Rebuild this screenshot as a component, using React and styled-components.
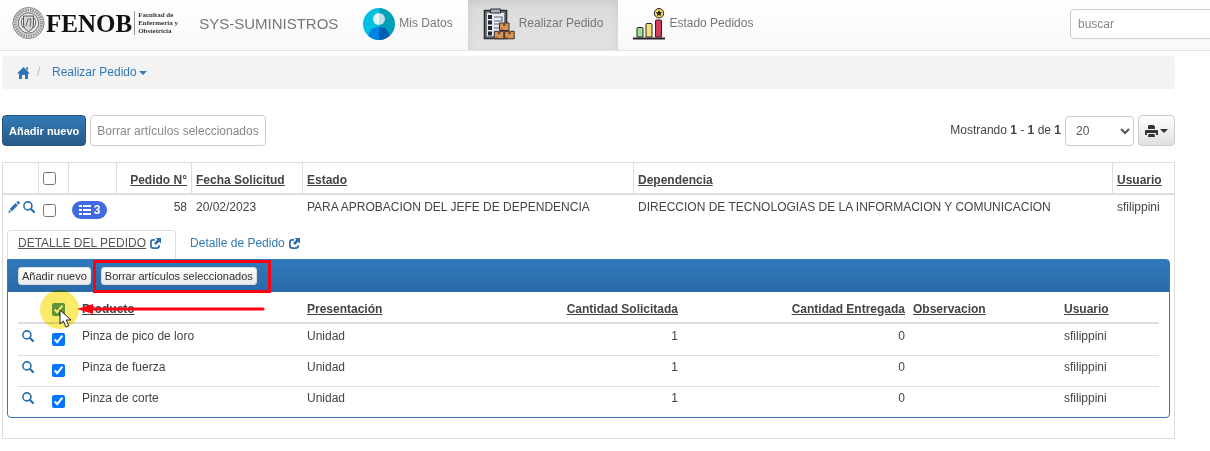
import { useState } from 'react';
import styled, { createGlobalStyle, css } from 'styled-components';

const GlobalStyle = createGlobalStyle`
  * {
    box-sizing: border-box;
  }
  body {
    margin: 0;
    background: #fff;
    color: #444;
    font-family: "Liberation Sans", Arial, sans-serif;
    font-size: 12px;
    line-height: 17px;
    overflow-x: hidden;
  }
  a {
    color: #337ab7;
    text-decoration: none;
  }
  button, input, select {
    font-family: inherit;
    font-size: 12px;
  }
  svg {
    display: block;
    flex: none;
  }
`;

/* Navbar */

const Navbar = styled.nav`
  display: flex;
  height: 51px;
  padding-left: 12px;
  overflow: hidden;
  background: linear-gradient(#fff, #f8f8f8);
  border-bottom: 1px solid #e4e4e4;
`;

const Brand = styled.a`
  display: flex;
  align-items: center;
  height: 46px;
  margin-right: 10px;
  color: #777;
  font-size: 15px;
`;

const LogoName = styled.span`
  margin-left: 1px;
  padding-right: 2px;
  color: #111;
  font-family: "Liberation Serif", serif;
  font-size: 25px;
  font-weight: bold;
`;

const LogoCaption = styled.span`
  width: 65px;
  padding-left: 3px;
  border-left: 1px solid #999;
  color: #333;
  font-family: "Liberation Serif", serif;
  font-size: 7px;
  font-weight: bold;
  line-height: 8px;
  white-space: pre-line;
`;

const NavItem = styled.a`
  display: flex;
  align-items: center;
  gap: 4px;
  height: 50px;
  padding: 0 15px 3px;
  color: #777;
  white-space: nowrap;
  ${({ $active }) =>
    $active &&
    css`
      background: linear-gradient(#dbdbdb, #e2e2e2);
      box-shadow: inset 0 3px 9px rgba(0, 0, 0, 0.08);
    `}
`;

const SearchForm = styled.form`
  flex: none;
  width: 160px;
  margin: 9px -20px 0 auto;
`;

const SearchInput = styled.input`
  width: 100%;
  height: 30px;
  padding: 0 7px;
  border: 1px solid #ccc;
  border-radius: 4px;
  background: #fff;
  &::placeholder {
    color: #888;
  }
`;

/* Page */

const Page = styled.main`
  padding: 5px 35px 12px 2px;
`;

const Breadcrumb = styled.ol`
  display: flex;
  align-items: center;
  height: 33px;
  margin: 0 0 26px;
  padding: 0 15px;
  list-style: none;
  background: #f3f3f3;
  border-radius: 4px;
`;

const Crumb = styled.li`
  display: flex;
  align-items: center;
  & + &::before {
    content: "/";
    width: 15px;
    margin-left: 7px;
    color: #bbb;
  }
  a {
    display: flex;
    align-items: center;
    gap: 2px;
  }
`;

const Toolbar = styled.div`
  display: flex;
  align-items: center;
  gap: 4px;
  margin-bottom: 16px;
`;

const Spacer = styled.div`
  flex: 1;
`;

const Button = styled.button`
  display: flex;
  align-items: center;
  gap: 2px;
  height: 31px;
  padding: 0 6px;
  border: 1px solid #ccc;
  border-radius: 4px;
  background: linear-gradient(#fff, #e0e0e0);
  color: #333;
  white-space: nowrap;
`;

const PrimaryButton = styled(Button)`
  border-color: #245580;
  background: linear-gradient(#337ab7, #265a88);
  color: #fff;
  font-size: 11px;
  font-weight: bold;
`;

const PlainButton = styled(Button)`
  background: #fff;
  color: #888;
`;

const SmallButton = styled(Button)`
  height: 18px;
  padding: 0 3px;
  border-color: #ddd;
  border-radius: 3px;
  background: linear-gradient(#fff, #ebebeb);
  font-size: 11px;
`;

const PageSize = styled.select`
  width: 69px;
  height: 30px;
  padding: 0 0 0 6px;
  border: 1px solid #ccc;
  border-radius: 4px;
  background: #fff;
  color: #555;
`;

/* Tables */

const Table = styled.table`
  width: 100%;
  table-layout: fixed;
  border-collapse: separate;
  border-spacing: 0;
  th,
  td {
    padding: 0 4px;
    text-align: left;
    white-space: nowrap;
  }
  th a {
    color: #444;
    text-decoration: underline;
  }
`;

const OrdersTable = styled(Table)`
  border: 1px solid #ddd;
  > thead > tr > th {
    height: 32px;
    padding: 9px 4px 4px;
    border-bottom: 2px solid #ddd;
    vertical-align: top;
  }
  > thead > tr > th + th {
    border-left: 1px solid #ddd;
  }
  > tbody > tr > td {
    padding: 4px 4px 0 5px;
    vertical-align: top;
  }
`;

const ItemsTable = styled(Table)`
  > thead > tr > th {
    height: 32px;
    padding-top: 4px;
    border-bottom: 2px solid #ddd;
  }
  > tbody > tr > td {
    height: 31px;
    padding: 4px 4px 0;
    vertical-align: top;
  }
  > tbody > tr + tr > td {
    padding-top: 3px;
    border-top: 1px solid #ddd;
  }
`;

const HeadCell = styled.th`
  &&&&& {
    text-align: ${({ $right }) => ($right ? 'right' : 'left')};
  }
`;

const Cell = styled.td`
  &&&&& {
    text-align: ${({ $right }) => ($right ? 'right' : 'left')};
  }
`;

const Actions = styled.div`
  display: flex;
  gap: 3px;
  padding-top: 2px;
`;

const Checkbox = styled.input`
  display: block;
  width: 13px;
  height: 13px;
  margin: ${({ $top = 0 }) => $top}px 0 0;
  accent-color: ${({ $accent = '#0075ff' }) => $accent};
`;

const Badge = styled.a`
  display: flex;
  align-items: center;
  justify-content: center;
  gap: 3px;
  width: 35px;
  height: 18px;
  margin: 2px 0 0 -1px;
  border-radius: 9px;
  background: #4169e1;
  color: #fff;
  font-weight: bold;
`;

/* Detail */

const DetailCell = styled.td`
  &&&&& {
    padding: 11px 4px 20px;
  }
`;

const Tabs = styled.div`
  display: flex;
`;

const Tab = styled.a`
  display: flex;
  align-items: center;
  gap: 4px;
  height: 29px;
  padding: 0 14px 4px 13px;
  border: 1px solid transparent;
  border-bottom: 0;
  ${({ $active }) =>
    $active &&
    css`
      padding-left: 10px;
      border-color: #ddd;
      border-radius: 4px 4px 0 0;
      span {
        color: #555;
        text-decoration: underline;
      }
    `}
`;

const Panel = styled.section`
  position: relative;
  border: 1px solid #337ab7;
  border-radius: 0 4px 4px 4px;
`;

const PanelHead = styled.div`
  display: flex;
  align-items: center;
  gap: 10px;
  height: 32px;
  padding: 0 10px;
  background: linear-gradient(#2f7abb, #2a69a6);
`;

const PanelBody = styled.div`
  padding: 0 10px;
`;

/* Annotations drawn over the panel */

const Frame = styled.div`
  position: absolute;
  top: 0;
  left: 85px;
  width: 178px;
  height: 33px;
  border: 3px solid #fe0010;
  pointer-events: none;
`;

const Spot = styled.div`
  position: absolute;
  top: 30px;
  left: 32px;
  width: 39px;
  height: 39px;
  border-radius: 50%;
  background: #faea68;
  mix-blend-mode: multiply;
  pointer-events: none;
`;

const Arrow = styled.svg`
  position: absolute;
  top: 43px;
  left: 69px;
  pointer-events: none;
`;

const Pointer = styled.svg`
  position: absolute;
  top: 49px;
  left: 51px;
  pointer-events: none;
`;

/* Icons */

const Seal = () => (
  <svg width="33" height="34" viewBox="0 0 33 34" fill="none">
    <circle cx="16.5" cy="17" r="15.6" fill="#e2e2e2" stroke="#888" />
    <circle cx="16.5" cy="17" r="13" stroke="#909090" strokeWidth="3.2" strokeDasharray="1.4 1" />
    <circle cx="16.5" cy="17" r="10.2" fill="#ececec" stroke="#666" />
    <path d="M11.500 10h10v8q0 5-5 7.500-5-2.500-5-7.500z" fill="#d6d6d6" stroke="#555" />
    <path d="m14 20 2-7h3l-1 8M10.500 12q-3 5 1 10M22.500 12q3 5-1 10" stroke="#666" />
  </svg>
);

const UserIcon = () => (
  <svg width="32" height="32" viewBox="0 0 32 32">
    <clipPath id="user-circle">
      <circle cx="16" cy="16" r="16" />
    </clipPath>
    <g clipPath="url(#user-circle)">
      <path fill="#00c2e0" d="M0 0h16v32H0z" />
      <path fill="#009fb8" d="M16 0h16v32H16z" />
      <path fill="#0082e6" d="M5 32q0-13 11-13v13z" />
      <path fill="#005fb0" d="M16 19q11 0 11 13H16z" />
      <path fill="#e5f7fa" d="M16 5a6 6 0 0 0 0 12z" />
      <path fill="#bde2e8" d="M16 5a6 6 0 0 1 0 12z" />
    </g>
  </svg>
);

const Box = ({ x, y }) => (
  <g transform={`translate(${x} ${y})`}>
    <path d="M.5.500h9.500v7.500H.5z" fill="#d79555" stroke="#3b3030" />
    <path d="M4 .5h2.500v3H4z" fill="#7b4b2c" />
    <path d="M2 6.500h2" stroke="#7b4b2c" />
  </g>
);

const OrderIcon = () => (
  <svg width="32" height="32" viewBox="0 0 32 32">
    <path d="M1.500 2.500h22v28h-22z" fill="#747b88" stroke="#292b31" strokeWidth="1.6" />
    <path d="M4 5h17v23H4z" fill="#e5ebf2" />
    <path d="M7.500 1h10v4h-10z" fill="#a8aeb8" stroke="#292b31" />
    <path d="M5 7h4v4H5zm0 5.500h4v4H5zM5 18h4v4H5zm0 5.500h4v4H5z" fill="#24262c" />
    <path d="M11 9h8v4h-8m0 3h7m-7 4h5m-5 5h3" fill="none" stroke="#5a6270" strokeWidth="1.2" />
    <Box x="16" y="14.500" />
    <Box x="10.800" y="22.800" />
    <Box x="21.200" y="22.800" />
  </svg>
);

const StatusIcon = () => (
  <svg width="32" height="32" viewBox="0 0 32 32" stroke="#2b2427">
    <path d="M4 29V20.500q0-1 1-1h4q1 0 1 1V29z" fill="#a5dc9b" />
    <path d="M13 29V16.500q0-1 1-1h4q1 0 1 1V29z" fill="#f6e078" />
    <path d="M22.500 29V13q0-1 1-1h4q1 0 1 1v16z" fill="#cf3d58" />
    <path d="M0 29.500h32v2H0z" fill="#2b2427" stroke="none" />
    <circle cx="26" cy="5.200" r="4.700" fill="#f3d85d" />
    <path d="m26 2 1 2 2.200.3-1.600 1.500.4 2.200-2-1-2 1 .4-2.200-1.600-1.500L25 4z" fill="#2b2427" stroke="none" />
  </svg>
);

const HomeIcon = () => (
  <svg width="13" height="12" viewBox="0 0 13 12" fill="#2b74b4">
    <path d="M6.500 0 13 6.500h-2V12H8V8H5v4H2V6.500H0zM9 .500h2v3L9 1.500z" />
  </svg>
);

const Caret = ({ color = '#337ab7' }) => (
  <svg width="8" height="4" viewBox="0 0 8 4">
    <path d="M0 0h8L4 4z" fill={color} />
  </svg>
);

const PrintIcon = () => (
  <svg width="13" height="12" viewBox="0 0 13 12" fill="#333">
    <path d="M4 0h4.500L10 1.500V4H3V1zM1 5h11q1 0 1 1v4h-2V8H2v2H0V6q0-1 1-1zM3.500 9h6l.5 3H3z" />
  </svg>
);

const PencilIcon = () => (
  <svg width="12" height="12" viewBox="0 0 12 12" fill="#2b6fad">
    <path d="M9.600.300q.6-.5 1.200.1l.9.900q.5.600 0 1.200L10.600 3.600 8.400 1.400zM7.700 2.100l2.200 2.200-6 6-2.200-2.200zM1.200 8.900l2 2L.2 11.800z" />
  </svg>
);

const SearchIcon = () => (
  <svg width="12" height="12" viewBox="0 0 12 12" fill="none" stroke="#2b6fad">
    <circle cx="4.900" cy="4.900" r="4" strokeWidth="1.600" />
    <path d="m7.800 7.800 3.200 3.200" strokeWidth="2.200" strokeLinecap="round" />
  </svg>
);

const ListIcon = () => (
  <svg width="12" height="10" viewBox="0 0 12 10" fill="#fff">
    <path d="M0 0h3v2H0zm4 0h8v2H4zM0 4h3v2H0zm4 0h8v2H4zM0 8h3v2H0zm4 0h8v2H4z" />
  </svg>
);

const OpenIcon = () => (
  <svg width="11" height="11" viewBox="0 0 12 12">
    <path d="M5.500 2H3.500Q1 2 1 4.500v4Q1 11 3.500 11h4Q10 11 10 8.500V8" fill="none" stroke="#2b6fad" strokeWidth="1.900" />
    <path d="M6 0h6v6l-2-2-3.500 3.500-2-2L8 2z" fill="#2b6fad" />
  </svg>
);

const navItems = [
  { label: 'Mis Datos', icon: <UserIcon /> },
  { label: 'Realizar Pedido', icon: <OrderIcon />, active: true },
  { label: 'Estado Pedidos', icon: <StatusIcon /> },
];

const orderColumns = [
  { label: 'Pedido N°', right: true },
  { label: 'Fecha Solicitud' },
  { label: 'Estado' },
  { label: 'Dependencia' },
  { label: 'Usuario' },
];

const itemColumns = [
  { label: 'Producto' },
  { label: 'Presentación' },
  { label: 'Cantidad Solicitada', right: true },
  { label: 'Cantidad Entregada', right: true },
  { label: 'Observacion' },
  { label: 'Usuario' },
];

const items = [
  ['Pinza de pico de loro', 'Unidad', '1', '0', '', 'sfilippini'],
  ['Pinza de fuerza', 'Unidad', '1', '0', '', 'sfilippini'],
  ['Pinza de corte', 'Unidad', '1', '0', '', 'sfilippini'],
];

const Columns = ({ widths }) => (
  <colgroup>
    {widths.map((width, index) => (
      <col key={index} width={width} />
    ))}
  </colgroup>
);

const HeadCells = ({ columns }) =>
  columns.map(({ label, right }) => (
    <HeadCell key={label} $right={right}>
      <a href="#">{label}</a>
    </HeadCell>
  ));

function Items() {
  const [selected, setSelected] = useState(items.map(() => true));

  const toggle = (index) =>
    setSelected(selected.map((value, i) => (i === index ? !value : value)));

  return (
    <Panel>
      <PanelHead>
        <SmallButton type="button">Añadir nuevo</SmallButton>
        <SmallButton type="button">Borrar artículos seleccionados</SmallButton>
      </PanelHead>
      <PanelBody>
        <ItemsTable>
          <Columns widths={[30, 30, 225, 239, 140, 227, 151, 99]} />
          <thead>
            <tr>
              <th />
              <th>
                <Checkbox
                  type="checkbox"
                  aria-label="Seleccionar todos los productos"
                  $accent="#5fa088"
                  checked={selected.every(Boolean)}
                  onChange={(e) =>
                    setSelected(items.map(() => e.target.checked))
                  }
                />
              </th>
              <HeadCells columns={itemColumns} />
            </tr>
          </thead>
          <tbody>
            {items.map((item, index) => (
              <tr key={item[0]}>
                <td>
                  <Actions>
                    <a href="#" aria-label={`Ver ${item[0]}`}>
                      <SearchIcon />
                    </a>
                  </Actions>
                </td>
                <td>
                  <Checkbox
                    type="checkbox"
                    aria-label={item[0]}
                    $top={5}
                    checked={selected[index]}
                    onChange={() => toggle(index)}
                  />
                </td>
                {item.map((value, i) => (
                  <Cell key={i} $right={itemColumns[i].right}>
                    {value}
                  </Cell>
                ))}
              </tr>
            ))}
          </tbody>
        </ItemsTable>
      </PanelBody>
      <Frame />
      <Spot />
      <Arrow width="189" height="12" viewBox="0 0 189 12">
        <path d="M14 6h172" stroke="#fe0010" strokeWidth="3" strokeLinecap="round" />
        <path d="M0 6 16 1v10z" fill="#fe0010" />
      </Arrow>
      <Pointer width="13" height="19" viewBox="0 0 13 19">
        <path d="M1 1v14l3.300-3 2.700 6 2.800-1.200L7.200 11H12z" fill="#fff" stroke="#222" />
      </Pointer>
    </Panel>
  );
}

export default function App() {
  return (
    <>
      <GlobalStyle />
      <Navbar>
        <Brand href="#">
          <Seal />
          <LogoName>FENOB</LogoName>
          <LogoCaption>{'Facultad de\nEnfermería y\nObstetricia'}</LogoCaption>
          SYS-SUMINISTROS
        </Brand>
        {navItems.map(({ label, icon, active }) => (
          <NavItem key={label} href="#" $active={active}>
            {icon}
            {label}
          </NavItem>
        ))}
        <SearchForm>
          <SearchInput type="text" placeholder="buscar" aria-label="buscar" />
        </SearchForm>
      </Navbar>
      <Page>
        <Breadcrumb>
          <Crumb>
            <a href="#" aria-label="Inicio">
              <HomeIcon />
            </a>
          </Crumb>
          <Crumb>
            <a href="#">
              Realizar Pedido
              <Caret />
            </a>
          </Crumb>
        </Breadcrumb>
        <Toolbar>
          <PrimaryButton type="button">Añadir nuevo</PrimaryButton>
          <PlainButton type="button">Borrar artículos seleccionados</PlainButton>
          <Spacer />
          <span>
            Mostrando <b>1</b> - <b>1</b> de <b>1</b>
          </span>
          <PageSize aria-label="Registros por página" defaultValue="20">
            <option>10</option>
            <option>20</option>
            <option>50</option>
          </PageSize>
          <Button type="button" aria-label="Imprimir">
            <PrintIcon />
            <Caret color="#333" />
          </Button>
        </Toolbar>
        <OrdersTable>
          <Columns widths={[35, 30, 48, 75, 111, 331, 479, 62]} />
          <thead>
            <tr>
              <th />
              <th>
                <Checkbox
                  type="checkbox"
                  aria-label="Seleccionar todos los pedidos"
                />
              </th>
              <th />
              <HeadCells columns={orderColumns} />
            </tr>
          </thead>
          <tbody>
            <tr>
              <td>
                <Actions>
                  <a href="#" aria-label="Editar pedido">
                    <PencilIcon />
                  </a>
                  <a href="#" aria-label="Ver pedido">
                    <SearchIcon />
                  </a>
                </Actions>
              </td>
              <td>
                <Checkbox type="checkbox" aria-label="Pedido 58" $top={5} />
              </td>
              <td>
                <Badge href="#">
                  <ListIcon />3
                </Badge>
              </td>
              <Cell $right>58</Cell>
              <td>20/02/2023</td>
              <td>PARA APROBACION DEL JEFE DE DEPENDENCIA</td>
              <td>DIRECCION DE TECNOLOGIAS DE LA INFORMACION Y COMUNICACION</td>
              <td>sfilippini</td>
            </tr>
            <tr>
              <DetailCell colSpan={8}>
                <Tabs>
                  <Tab href="#" $active>
                    <span>DETALLE DEL PEDIDO</span>
                    <OpenIcon />
                  </Tab>
                  <Tab href="#">
                    <span>Detalle de Pedido</span>
                    <OpenIcon />
                  </Tab>
                </Tabs>
                <Items />
              </DetailCell>
            </tr>
          </tbody>
        </OrdersTable>
      </Page>
    </>
  );
}
